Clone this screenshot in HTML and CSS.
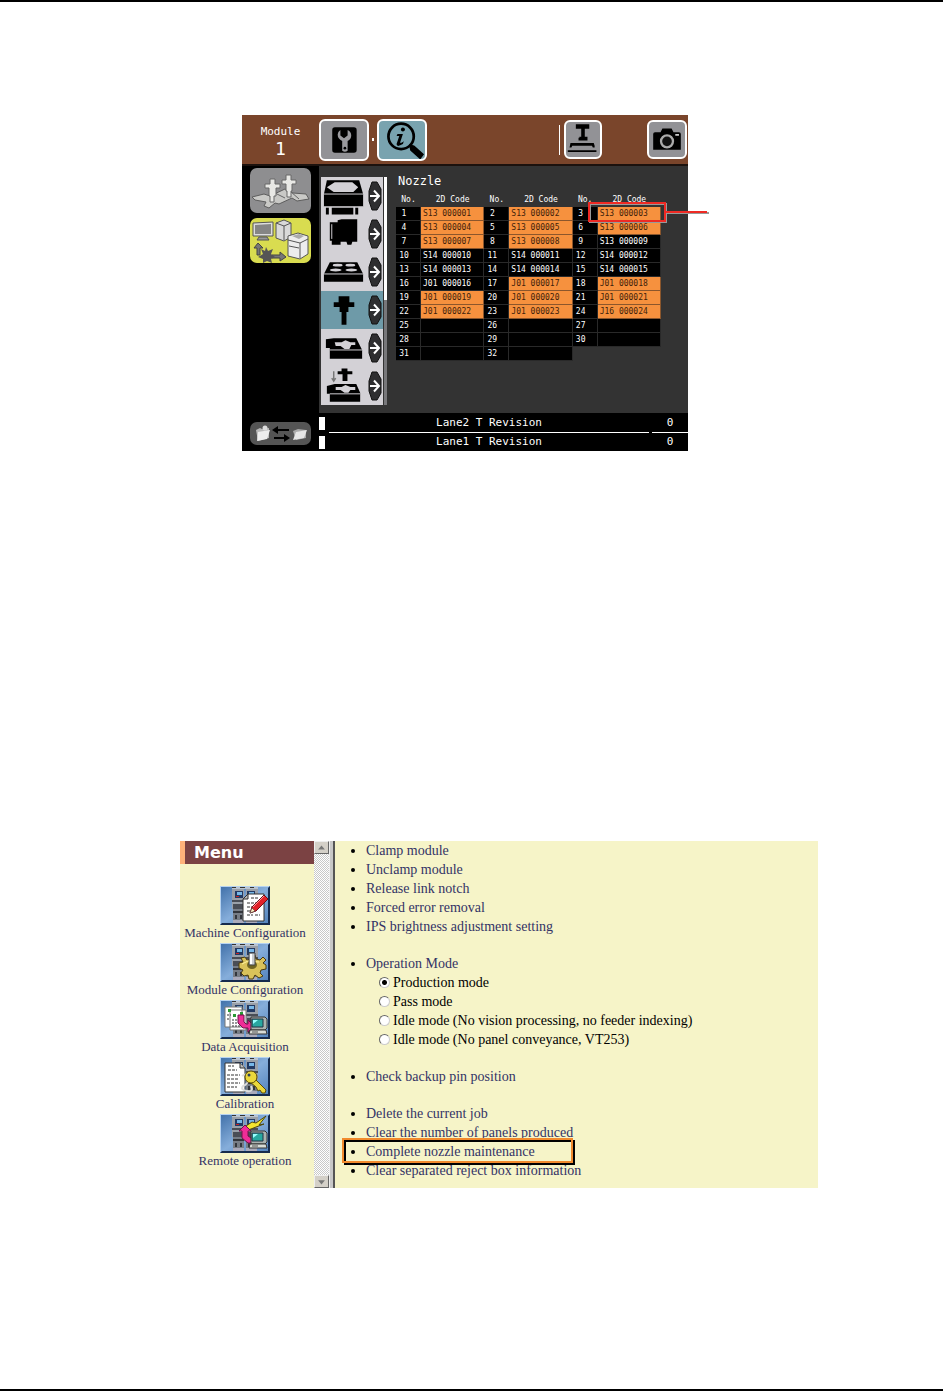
FILE: index.html
```html
<!DOCTYPE html>
<html lang="en">
<head>
<meta charset="utf-8">
<title>Nozzle maintenance</title>
<link rel="stylesheet" href="styles.css">
</head>
<body>
<svg class="defs" aria-hidden="true">
  <defs>
    <linearGradient id="sky" x1="0" y1="0" x2="1" y2="1">
      <stop offset="0" stop-color="#3f6fa8"/><stop offset=".5" stop-color="#86aedb"/><stop offset="1" stop-color="#4f80bb"/>
    </linearGradient>
    <symbol id="next" viewBox="0 0 14 30">
      <path d="M4 1h5l4 7v14l-4 7H4L1 20V10z" fill="#2e2e30" stroke="#111"/>
      <path d="M2 15h8M6 9.500l5 5.500-5 5.500" fill="none" stroke="#fff" stroke-width="2"/>
    </symbol>
    <symbol id="machines" viewBox="0 0 50 39">
      <path fill="url(#sky)" d="M0 0h50v39H0z"/>
      <path fill="#b9c3cf" d="M12 0h26v3H12z"/>
      <path fill="#333" d="M12 0h4v2h-4zM20 0h5v2h-5zM30 0h4v2h-4z"/>
      <path fill="#9aa0a8" d="M12 3h12v20H12zM26 3h12v20H26z"/>
      <path fill="#233a63" d="M15 5h8v7h-8zM27 5h8v7h-8z"/>
      <path fill="#77b8e8" d="M17 6h5v3h-5zM29 6h5v3h-5z"/>
      <path fill="#c22" d="M16 10h3v1h-3z"/>
      <path fill="#4a4e56" d="M12 14h12v2H12zM26 14h12v2H26zM13 18h10v5H13zM27 18h10v5H27z"/>
      <path fill="#777d86" d="M13 23h11v14H13zM26 23h11v14H26z"/>
      <path fill="#33363c" d="M13 25h11v2H13zM26 25h11v2H26zM15 29h2v4h-2zM20 29h2v4h-2zM28 29h2v4h-2zM33 29h2v4h-2z"/>
      <path fill="#aab" d="M13 34h11v3H13zM26 34h11v3H26z"/>
      <path fill="#b6d3f1" d="M0 0h50l-1 1H1v37l-1 1z"/>
      <path fill="#162b4d" d="M50 0v39H0l2-2h46V2z"/>
    </symbol>
    <symbol id="pc" viewBox="0 0 20 20">
      <path d="M3 1h14l2 2v9l-2 2H3z" fill="#aab3b0" stroke="#333"/>
      <path d="M4 3h11v8H4z" fill="#28a7a0" stroke="#234"/>
      <path d="M5 4h5L5 8z" fill="#9ff"/>
      <path d="M2 14h16l1 4H1z" fill="#d8dcd6" stroke="#333"/>
      <path d="M4 16h6" stroke="#555"/>
    </symbol>
  </defs>
</svg>

<main class="page">
  <section class="panel" aria-label="Module panel">
    <header class="panel-head">
      <div class="module"><span>Module</span><span class="module-no">1</span></div>
      <button class="tool" aria-label="Maintenance">
        <svg viewBox="0 0 50 42"><rect x="12" y="7" width="27" height="28" rx="3" fill="#000"/>
          <path d="M23 33V22q-5-2-5-7 0-3 3-5v6l4 3 4-3v-6q4 2 4 6 0 4-4 6v11q-3 2-6 0z" fill="#9a9a9e"/><circle cx="26" cy="30" r="1.500" fill="#000"/></svg>
      </button>
      <span class="dot"></span>
      <button class="tool tool-info" aria-label="Information">
        <svg viewBox="0 0 50 42"><circle cx="24" cy="17" r="14" fill="none" stroke="#000" stroke-width="3"/>
          <path d="M34 27l4 1 10 9-3 4-10-9z" fill="#000" stroke="#000" stroke-width="2"/>
          <circle cx="26" cy="9.500" r="2.200"/><path d="M20 14.500h6l-3 9q0 2 4-1l-1 3q-7 4-7 0l3-9h-3z"/></svg>
      </button>
      <span class="divider"></span>
      <button class="tool tool-small" aria-label="Nozzle height">
        <svg viewBox="0 0 38 38"><path d="M11 2h15v5h-5v9h3v2h-9v-2h2V7h-6zM14 17h10v3H14zM5 23h26l1 3v2h-2l-1-2H7l-1 2H4zM2 31h32v2H2z"/></svg>
      </button>
      <button class="tool tool-small tool-camera" aria-label="Camera">
        <svg viewBox="0 0 38 38"><path d="M4 13q0-2 2-2h6l2-4h10l2 4h6q2 0 2 2v17H4z"/><circle cx="19" cy="21" r="6.500" fill="#111" stroke="#aaa" stroke-width="2.500"/><path d="M28 13h4v2h-4z" fill="#ccc"/></svg>
      </button>
    </header>

    <nav class="side">
      <button class="side-btn" aria-label="Nozzles">
        <svg viewBox="0 0 61 45">
          <path d="M2 29l12-3 6 2 15-7 8 4 13 1 3 5-12 2-5-3-13 6-4-1-6 5-5-2 2-4-11-2z" fill="#c9c9c6" stroke="#5d5d5d"/>
          <path d="M21 23l14 7M40 23l9 8" stroke="#666"/>
          <path d="M20 11h5v5h5v4h-4v8h-2v6h-4v-6h-1v-8h-4v-4h5zM36 7h5v5h5v4h-4v7h-1v6h-4v-6h-1v-7h-4v-4h4z" fill="#e8e8e5" stroke="#686868"/>
        </svg>
      </button>
      <button class="side-btn side-btn-active" aria-label="Host and machine">
        <svg viewBox="0 0 61 45">
          <path d="M3 5l20-1v14H3z" fill="#ddd" stroke="#555"/><path d="M5 7l16-1v10H5z" fill="#858585"/><path d="M9 19h8l2 3H7z" fill="#999" stroke="#555"/>
          <path d="M26 5l8-3 7 3v14l-7 4-8-3z" fill="#d9d9d9" stroke="#555"/><path d="M26 5l8 3 7-3M34 8v14" fill="none" stroke="#555"/>
          <path d="M38 18l10-3 10 3v18l-8 5-12-3z" fill="#ededed" stroke="#555"/><path d="M38 22l12 3 8-4M50 25v15M39 28l10 2" fill="none" stroke="#555"/><path d="M42 18l7-2 5 2-5 3z" fill="#aaa"/>
          <path d="M8 25l-4 5h3v7h3v-7h3zM22 37h8v-3l6 5-6 4v-3h-8z" fill="#777" stroke="#444"/>
          <path d="M16 29l2 4 5-2-2 5 4 3-4 2 1 4-5-2-4 2v-4l-5-2 5-3-2-5 4 2z" fill="#555"/>
        </svg>
      </button>
      <button class="side-btn side-btn-swap" aria-label="Transfer">
        <svg viewBox="0 0 61 23">
          <path d="M6 8l4-2 2 1 7-1v10L8 19z" fill="#bbb"/><path d="M8 10l12-2-3 9-10 2z" fill="#eee"/><circle cx="15" cy="6" r="2.500" fill="#ddd"/>
          <path d="M43 9l5-2 8 1v8l-10 2z" fill="#aaa"/><path d="M46 10l11-2-3 8-11 2z" fill="#e5e5e5"/>
          <path d="M22 8l6-4v3h11v2H28v3zM40 16l-6-4v3H24v2h10v3z" fill="#000"/>
        </svg>
      </button>
    </nav>

    <div class="work">
      <div class="units">
        <button class="unit" aria-label="Camera unit"><svg viewBox="0 0 48 38"><path d="M6 3h33l4 14v13H3V17z"/><path d="M14 5h18l6 5-5 5H13l-7-5z" fill="#d3d1d6"/><path d="M3 17h40M3 30h40" stroke="#d3d1d6"/><path d="M5 31h3v7H5zM11 31h22v7H11zM35 31h3v7h-3z"/></svg><svg class="next"><use href="#next"/></svg></button>
        <button class="unit" aria-label="Head unit"><svg viewBox="0 0 48 38"><path d="M17 5l4-1h16v23h-5l-1 3h-4l-1-3h-6v3h-9v-4H9V7h8z"/><path d="M11 9v15" stroke="#d3d1d6"/></svg><svg class="next"><use href="#next"/></svg></button>
        <button class="unit" aria-label="Nozzle station"><svg viewBox="0 0 48 38"><path d="M9 9h28l6 12v8H3v-8z"/><path d="M3 21h40" stroke="#d3d1d6"/><g fill="#d3d1d6"><ellipse cx="17" cy="12" rx="5" ry="1.500"/><ellipse cx="30" cy="12" rx="5" ry="1.500"/><ellipse cx="15" cy="17" rx="6" ry="1.500"/><ellipse cx="31" cy="17" rx="6" ry="1.500"/></g></svg><svg class="next"><use href="#next"/></svg></button>
        <button class="unit unit-active" aria-label="Nozzle"><svg viewBox="0 0 48 38"><path d="M18 5h11v6h5v5h-6v5h-2v13h-5V21h-2v-5h-6v-5h5z"/></svg><svg class="next"><use href="#next"/></svg></button>
        <button class="unit" aria-label="Feeder"><svg viewBox="0 0 48 38"><path d="M13 9h23l6 12v9H9V19H5v-9z"/><path d="M9 21h33" stroke="#d3d1d6"/><path d="M14 13h7l4-2 5 2h5v3h-4l-2 4h-5l-4-3h-5z" fill="#d3d1d6"/></svg><svg class="next"><use href="#next"/></svg></button>
        <button class="unit" aria-label="Feeder pick"><svg viewBox="0 0 48 38"><path d="M21 1h6v3h5v3h-5v7h-5V7h-5V4h4zM14 17h22l4 9v9H9v-8H6v-8z"/><path d="M9 27h31" stroke="#d3d1d6"/><path d="M15 20h6l4-2 5 2h5v3h-5l-2 3h-4l-4-3h-5z" fill="#d3d1d6"/><path d="M13 4v10M11 11l2 3 2-3" fill="none" stroke="#777" stroke-width="1.500"/></svg><svg class="next"><use href="#next"/></svg></button>
      </div>
      <div class="unit-scroll"></div>
      <div class="nozzles">
        <h1>Nozzle</h1>
        <table class="codes">
          <thead><tr><th class="no">No.</th><th>2D Code</th><th class="no">No.</th><th>2D Code</th><th class="no">No.</th><th>2D Code</th></tr></thead>
          <tbody>
            <tr><td>1</td><td class="on">S13 000001</td><td>2</td><td class="on">S13 000002</td><td>3</td><td class="on picked">S13 000003</td></tr>
            <tr><td>4</td><td class="on">S13 000004</td><td>5</td><td class="on">S13 000005</td><td>6</td><td class="on">S13 000006</td></tr>
            <tr><td>7</td><td class="on">S13 000007</td><td>8</td><td class="on">S13 000008</td><td>9</td><td>S13 000009</td></tr>
            <tr><td>10</td><td>S14 000010</td><td>11</td><td>S14 000011</td><td>12</td><td>S14 000012</td></tr>
            <tr><td>13</td><td>S14 000013</td><td>14</td><td>S14 000014</td><td>15</td><td>S14 000015</td></tr>
            <tr><td>16</td><td>J01 000016</td><td>17</td><td class="on">J01 000017</td><td>18</td><td class="on">J01 000018</td></tr>
            <tr><td>19</td><td class="on">J01 000019</td><td>20</td><td class="on">J01 000020</td><td>21</td><td class="on">J01 000021</td></tr>
            <tr><td>22</td><td class="on">J01 000022</td><td>23</td><td class="on">J01 000023</td><td>24</td><td class="on">J16 000024</td></tr>
            <tr><td>25</td><td></td><td>26</td><td></td><td>27</td><td></td></tr>
            <tr><td>28</td><td></td><td>29</td><td></td><td>30</td><td></td></tr>
            <tr><td>31</td><td></td><td>32</td><td></td></tr>
          </tbody>
        </table>
      </div>
    </div>

    <footer class="lanes">
      <div class="lane"><i></i><span class="lane-name">Lane2 T Revision</span><span class="lane-value">0</span></div>
      <div class="lane"><i></i><span class="lane-name">Lane1 T Revision</span><span class="lane-value">0</span></div>
    </footer>
  </section>

  <section class="console" aria-label="Machine menu">
    <nav class="menu">
      <h2>Menu</h2>
      <div class="menu-items">
        <a href="#machine"><svg viewBox="0 0 50 39"><use href="#machines"/><path d="M23 13l5-5h16v27H23z" fill="#fff" stroke="#333"/><path d="M23 13h5V8z" fill="#bbb" stroke="#333"/><path d="M31 12h8M27 17h10M27 21h8M27 25h5M27 29h6M35 29h5" stroke="#333" stroke-dasharray="3 1"/><path d="M30 27l2-6 12-12 4 4-12 12z" fill="#e22229" stroke="#701018"/><path d="M33 21L44 10" stroke="#f99"/><path d="M30 27l2-5 3 3z" fill="#fff0c0" stroke="#333" stroke-width=".5"/></svg>Machine Configuration</a>
        <a href="#module"><svg viewBox="0 0 50 39"><use href="#machines"/><path d="M19 20l4-1-2-4 4-1 2 3 3-1v-4h5l1 4 4 1 3-3 3 3-3 3 3 2v4l-5 1-1 3 3 3-4 2-4-3-2 4h-4l-1-4-4 1-3-3 2-3-4-2z" fill="#d9c25a" stroke="#4b3a0c"/><path d="M22 21l6-3 11 1" stroke="#fff3a0" fill="none"/><ellipse cx="32" cy="22" rx="5" ry="4" fill="#6f6421"/><path d="M29 10h6v12h-6z" fill="#c8ccd0" stroke="#444"/><path d="M31 11v10" stroke="#fff" stroke-width="2"/></svg>Module Configuration</a>
        <a href="#data"><svg viewBox="0 0 50 39"><use href="#machines"/><path d="M5 7h17v20H5zM10 10h16v20H10z" fill="#fff" stroke="#777"/><path d="M8 9h3v3H8zM13 14h3v3h-3zM20 12h3v3h-3z" fill="#2a9a35"/><path d="M12 20h12M12 23h10M12 26h9M7 15h4M7 19h3" stroke="#333" stroke-dasharray="2 1"/><path d="M18 15h6v7l2 2h2v-4l6 6-6 6v-4h-5l-5-5z" fill="#ef2d97" stroke="#71104a"/><svg x="28" y="16" width="20" height="20"><use href="#pc"/></svg></svg>Data Acquisition</a>
        <a href="#calibration"><svg viewBox="0 0 50 39"><use href="#machines"/><path d="M5 6h15l5 5v24H5z" fill="#fff" stroke="#333"/><path d="M20 6v5h5" fill="#bbb" stroke="#333"/><path d="M8 9h6M8 13h9M7 18h13M7 22h11M7 26h13M7 30h10" stroke="#333" stroke-dasharray="3 1"/><path d="M22 19q5-4 6 2t-5 8q-3 4 4 5t4-5" fill="none" stroke="#ddd" stroke-width="2"/><path d="M30 22l4-1 12 12-1 3h-3l-2-3-2 1-2-4-6-5z" fill="#ebd83c" stroke="#5d4c08"/><circle cx="31" cy="20" r="6" fill="#ebd83c" stroke="#5d4c08"/><circle cx="29" cy="18" r="1.500" fill="#345"/></svg>Calibration</a>
        <a href="#remote"><svg viewBox="0 0 50 39"><use href="#machines"/><path d="M26 12l6-4 4 1 10-7-7 9 5-1-8 3-5 2-4 1-4 3z" fill="#f3e52e" stroke="#4e480e"/><path d="M19 17l6-6 6 6h-3v5l3 2h3v5h-6l-6-5v-7z" fill="#ef2d97" stroke="#71104a"/><svg x="28" y="16" width="20" height="20"><use href="#pc"/></svg></svg>Remote operation</a>
      </div>
    </nav>
    <div class="scrollbar">
      <button aria-label="Scroll up"><svg viewBox="0 0 15 13"><path d="M3.500 9h8l-4-5z" fill="#777"/></svg></button>
      <button aria-label="Scroll down"><svg viewBox="0 0 15 13"><path d="M3.500 5h8l-4 5z" fill="#777"/></svg></button>
    </div>
    <div class="commands">
      <ul>
        <li><a href="#clamp">Clamp module</a></li>
        <li><a href="#unclamp">Unclamp module</a></li>
        <li><a href="#release">Release link notch</a></li>
        <li><a href="#forced">Forced error removal</a></li>
        <li><a href="#ips">IPS brightness adjustment setting</a></li>
      </ul>
      <ul>
        <li><a href="#mode">Operation Mode</a>
          <div class="modes">
            <label><input type="radio" name="mode" checked>Production mode</label>
            <label><input type="radio" name="mode">Pass mode</label>
            <label><input type="radio" name="mode">Idle mode (No vision processing, no feeder indexing)</label>
            <label><input type="radio" name="mode">Idle mode (No panel conveyance, VT253)</label>
          </div>
        </li>
      </ul>
      <ul>
        <li><a href="#backup">Check backup pin position</a></li>
      </ul>
      <ul>
        <li><a href="#delete">Delete the current job</a></li>
        <li><a href="#clear">Clear the number of panels produced</a></li>
        <li class="marked"><a href="#complete">Complete nozzle maintenance</a></li>
        <li><a href="#reject">Clear separated reject box information</a></li>
      </ul>
    </div>
  </section>
</main>
</body>
</html>
```

FILE: styles.css
```css
*, *::before, *::after { box-sizing: border-box; }
body { margin: 0; background: #fff; }
button { border: 0; padding: 0; margin: 0; font: inherit; cursor: pointer; }
svg { display: block; }
h1, h2, ul { margin: 0; padding: 0; font-weight: normal; }
a { color: #333366; text-decoration: none; }
.defs { position: absolute; width: 0; height: 0; }

.page {
  min-height: 100vh;
  border-top: 2px solid #000;
  border-bottom: 2px solid #000;
  padding: 113px 0;
}

/* Module panel */
.panel {
  margin: 0 255px 0 242px;
  display: grid;
  grid-template-columns: 77px 1fr;
  grid-template-rows: auto 1fr auto;
  background: #000;
  color: #fff;
  font-family: "DejaVu Sans Mono", "Liberation Mono", monospace;
}
.panel-head {
  grid-column: 1 / 3;
  display: flex;
  align-items: center;
  height: 51px;
  padding-right: 1px;
  background: #7a452b;
  border-bottom: 2px solid #1c120e;
}
.module { width: 77px; padding-top: 4px; text-align: center; font-size: 11px; line-height: 14px; }
.module-no { display: block; font-size: 18px; line-height: 20px; }
.tool { width: 50px; height: 42px; border: 2px solid #fff; border-radius: 6px; background: #929296; overflow: hidden; }
.tool svg { width: 100%; height: 100%; }
.tool-info { background: #79a3af; }
.tool-small { width: 38px; height: 39px; }
.tool-camera { width: 40px; margin-left: 45px; }
.dot { width: 2px; height: 3px; margin: 0 3px; background: #fff; }
.divider { width: 1px; height: 30px; margin: 0 4px 0 auto; background: #fff; }

.side { grid-row: 2 / 4; display: flex; flex-direction: column; gap: 5px; padding: 2px 8px 6px; }
.side-btn { height: 45px; border-radius: 7px; background: #8e8e90; }
.side-btn svg { width: 100%; height: 100%; }
.side-btn-active { background: #d9dc50; }
.side-btn-swap { height: 23px; margin-top: auto; background: #555; }

.work { display: flex; padding: 11px 27px 8px 2px; background: #333; }
.units { width: 62px; }
.unit { display: flex; align-items: center; width: 100%; height: 38px; background: #d3d1d6; }
.unit svg { width: 47px; height: 38px; }
.unit .next { width: 14px; height: 30px; }
.unit-active { background: #6e9aa8; }
.unit-scroll { width: 3px; height: 228px; margin: 0 9px 0 1px; background: linear-gradient(#fff 54%, #77777a 54%); }
.nozzles { flex: 1; margin-top: -4px; }
h1 { padding-left: 2px; font-size: 12px; line-height: 16px; }
.codes { width: 100%; table-layout: fixed; border-spacing: 0; font-size: 8px; line-height: 13px; }
.codes th { padding: 4px 0 1px; font-weight: normal; }
.codes th.no { width: 25px; }
.codes td { height: 14px; padding: 0 2px; background: #000; border-right: 1px solid #292929; border-bottom: 1px solid #292929; }
.codes td:nth-child(odd) { padding: 0 8px 0 0; text-align: center; }
.codes td.on { background: #f6913e; color: #3f220b; border-color: #8b562c; }
.codes .picked { position: relative; }
.picked::before {
  content: "";
  position: absolute;
  inset: -5px -6px -2px -10px;
  border: 2px solid #ee2a24;
  filter: drop-shadow(1px 1px 0 #999);
}
.picked::after {
  content: "";
  position: absolute;
  left: 100%;
  top: 4px;
  width: 42px;
  height: 2px;
  margin-left: 5px;
  background: #ee2a24;
  box-shadow: 2px 1px 0 #999;
}

.lanes { display: grid; padding-top: 1px; font-size: 11px; line-height: 18px; }
.lane { display: grid; grid-template-columns: 10px 1fr 36px; align-items: center; }
.lane i { width: 6px; height: 13px; background: #fff; }
.lane-name, .lane-value { text-align: center; }
.lane:first-child .lane-name, .lane:first-child .lane-value { border-bottom: 1px solid #fff; }
.lane-name { margin-right: 3px; }

/* Machine menu */
.console {
  margin: 390px 125px 0 180px;
  display: grid;
  grid-template-columns: 134px 15px 1fr;
  background: #f6f4c8;
  font-family: "Liberation Serif", "Times New Roman", serif;
}
h2 {
  padding-left: 9px;
  border-left: 5px solid #ffb27a;
  background: #7b4243;
  color: #fff;
  font: bold 16px/23px "DejaVu Sans", sans-serif;
}
.menu-items { display: grid; gap: 3px; padding: 22px 4px 0 0; }
.menu-items a { font-size: 13px; line-height: 15px; text-align: center; white-space: nowrap; }
.menu-items a > svg { width: 50px; height: 39px; margin: 0 auto; }

.scrollbar {
  display: flex;
  flex-direction: column;
  justify-content: space-between;
  background: repeating-conic-gradient(#c8c8c8 0 25%, #fff 0 50%) 0 0 / 2px 2px;
}
.scrollbar button { height: 13px; background: #d4d0c8; border: 1px solid; border-color: #eee #666 #666 #eee; }
.scrollbar svg { width: 100%; height: 100%; }

.commands {
  display: grid;
  gap: 18px;
  padding: 0 0 8px 31px;
  border-left: 6px solid;
  border-image: linear-gradient(to right, #eee 0 1px, #c8c8c8 1px 4px, #555 4px 6px) 0 0 0 6;
  color: #000;
  font-size: 14px;
  line-height: 19px;
}
.marked { position: relative; }
.marked::after {
  content: "";
  position: absolute;
  top: -4px;
  left: -24px;
  width: 231px;
  height: 25px;
  border: 2px solid #f18a2d;
  filter: drop-shadow(2px 2px 0 #000);
  pointer-events: none;
}
.modes { display: grid; padding-left: 13px; }
.modes label { display: flex; align-items: center; gap: 3px; }
.modes input {
  appearance: none;
  width: 11px;
  height: 11px;
  margin: 0;
  border: 1px solid;
  border-color: #666 #ccc #ccc #666;
  border-radius: 50%;
  background: #fff;
}
.modes input:checked { background: radial-gradient(circle, #000 2px, #fff 3px); }
```
